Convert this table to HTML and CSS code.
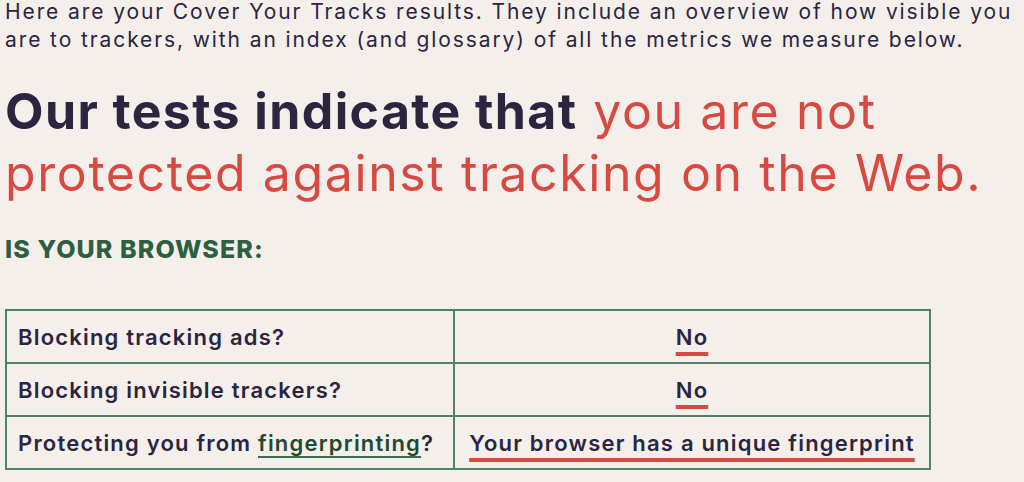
FILE: index.html
```html
<!DOCTYPE html>
<html lang="en">
<head>
<meta charset="utf-8">
<title>Cover Your Tracks results</title>
<link rel="stylesheet" href="styles.css">
</head>
<body>
<main class="page">
  <p class="intro">Here are your Cover Your Tracks results. They include an overview of how visible you are to trackers, with an index (and glossary) of all the metrics we measure below.</p>
  <h1 class="verdict"><strong>Our tests indicate that</strong> <span class="bad">you are not protected against tracking on the Web.</span></h1>
  <h2 class="label">IS YOUR BROWSER:</h2>
  <table class="results">
    <tr>
      <td class="q">Blocking tracking ads?</td>
      <td class="a"><span class="mark">No</span></td>
    </tr>
    <tr>
      <td class="q">Blocking invisible trackers?</td>
      <td class="a"><span class="mark">No</span></td>
    </tr>
    <tr>
      <td class="q">Protecting you from <a class="term" href="#">fingerprinting</a>?</td>
      <td class="a"><span class="mark">Your browser has a unique fingerprint</span></td>
    </tr>
  </table>
</main>
</body>
</html>
```
FILE: styles.css
```css
html, body {
  margin: 0;
  padding: 0;
  background: #f4efeb;
}
body {
  font-family: Inter, "Open Sans", sans-serif;
  color: #2b2540;
}
.page {
  padding: 0 5px;
}
.intro {
  margin: -2px 0 0;
  font-size: 21px;
  line-height: 28px;
  letter-spacing: 1.9px;
}
.verdict {
  margin: 26px 0 0;
  font-size: 50px;
  line-height: 62px;
  font-weight: 400;
  letter-spacing: 1.6px;
}
.verdict strong {
  font-weight: 700;
  letter-spacing: 1.4px;
}
.bad {
  color: #d84a41;
}
.label {
  margin: 30px 0 0;
  font-size: 25px;
  font-weight: 800;
  color: #2e5f41;
  line-height: 30px;
  letter-spacing: 1.1px;
}
.results {
  margin-top: 45px;
  border-collapse: collapse;
  width: 926px;
}
.results td {
  border: 2px solid #4f8463;
  height: 51px;
  padding: 0 11px;
  font-size: 22px;
  font-weight: 600;
  letter-spacing: 1.2px;
}
.results td.q {
  width: 424px;
}
.results td.a {
  text-align: center;
}
.mark {
  text-decoration: underline;
  text-decoration-color: #d84a41;
  text-decoration-thickness: 4px;
  text-underline-offset: 7px;
}
.term {
  color: #1f4a2f;
  text-decoration: underline;
  text-decoration-color: #3d6b4d;
  text-decoration-thickness: 2px;
  text-underline-offset: 5px;
}
```
